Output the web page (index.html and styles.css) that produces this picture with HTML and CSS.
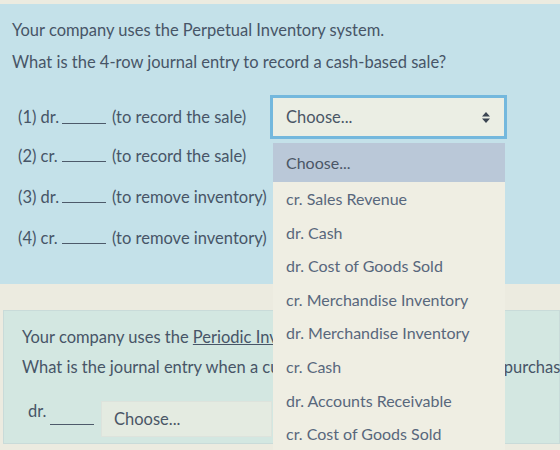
FILE: index.html
```html
<!DOCTYPE html>
<html>
<head>
<meta charset="utf-8">
<link rel="stylesheet" href="styles.css">
</head>
<body>
<div class="page">
  <section class="q q1">
    <p class="line">Your company uses the Perpetual Inventory system.</p>
    <p class="line">What is the 4-row journal entry to record a cash-based sale?</p>
    <div class="rows">
      <div class="row">
        <span class="lbl">(1) dr.</span><span class="blank"></span><span class="note">(to record the sale)</span>
        <div class="select focus">
          <span>Choose...</span>
          <svg class="arrows" width="8" height="11" viewBox="0 0 8 11"><path d="M4 0 L8 4.5 H0 Z M0 6.5 H8 L4 11 Z" fill="#3b4552"/></svg>
        </div>
      </div>
      <div class="row"><span class="lbl">(2) cr.</span><span class="blank"></span><span class="note">(to record the sale)</span></div>
      <div class="row"><span class="lbl">(3) dr.</span><span class="blank"></span><span class="note">(to remove inventory)</span></div>
      <div class="row"><span class="lbl">(4) cr.</span><span class="blank"></span><span class="note">(to remove inventory)</span></div>
    </div>
  </section>
  <section class="q q2">
    <p class="line">Your company uses the <a class="link">Periodic Inventory</a> system.</p>
    <p class="line">What is the journal entry when a customer pays for a merchandise purchase?</p>
    <div class="row2">
      <span class="lbl2">dr.</span><span class="blank"></span>
      <div class="select small"><span>Choose...</span></div>
    </div>
  </section>
  <ul class="dropdown">
    <li class="hi">Choose...</li>
    <li>cr. Sales Revenue</li>
    <li>dr. Cash</li>
    <li>dr. Cost of Goods Sold</li>
    <li>cr. Merchandise Inventory</li>
    <li>dr. Merchandise Inventory</li>
    <li>cr. Cash</li>
    <li>dr. Accounts Receivable</li>
    <li>cr. Cost of Goods Sold</li>
  </ul>
</div>
</body>
</html>
```
FILE: styles.css
```css
html, body {
  margin: 0;
  padding: 0;
}
body {
  width: 560px;
  height: 450px;
  overflow: hidden;
  background: #ecebe0;
  font-family: Lato, "Open Sans", sans-serif;
  font-size: 16.5px;
  color: #475567;
}
.page {
  position: relative;
  width: 560px;
  height: 450px;
  padding-top: 4px;
  box-sizing: border-box;
}
.q {
  box-sizing: border-box;
}
.q1 {
  height: 280px;
  background: #c4e1e9;
  padding: 15px 0 0 12px;
}
.line {
  margin: 0 0 10px 0;
  height: 22px;
  line-height: 22px;
  white-space: nowrap;
}
.q1 .line + .line {
  margin-bottom: 21px;
}
.rows {
  display: flex;
  flex-direction: column;
  padding-left: 6px;
}
.row {
  display: flex;
  align-items: center;
  height: 41px;
  white-space: nowrap;
}
.row:first-child {
  height: 46px;
  margin-bottom: -5px;
}
.lbl {
  width: 44px;
}
.blank {
  width: 44px;
  height: 0;
  border-bottom: 1px solid #4d5a6a;
  margin-top: 12px;
  margin-right: 6px;
}
.note {
  width: 158px;
}
.select {
  display: flex;
  align-items: center;
  justify-content: space-between;
  box-sizing: border-box;
  background: #ebeee4;
  color: #4a5666;
}
.select.focus {
  width: 237px;
  height: 44px;
  border: 3px solid #74b8dd;
  padding: 0 14px 0 13px;
}
.arrows {
  display: block;
}
.q2 {
  margin: 26px 0 0 3px;
  height: 134px;
  background: #d3e7e1;
  border: 1px solid #c9dbd9;
  padding: 15px 0 0 18px;
}
.q2 .line {
  margin-bottom: 8px;
}
.link {
  color: #475567;
  text-decoration: underline;
}
.row2 {
  display: flex;
  align-items: center;
  margin-top: 23px;
  padding-left: 6px;
}
.lbl2 {
  width: 22px;
  margin-top: -16px;
}
.row2 .blank {
  margin-right: 7px;
  margin-top: 10px;
}
.select.small {
  width: 171px;
  height: 36px;
  border: 1px solid #dde3dc;
  background: #e4ebe1;
  padding-left: 12px;
}
.dropdown {
  position: absolute;
  left: 273px;
  top: 143px;
  width: 232px;
  margin: 0;
  padding: 0;
  list-style: none;
  background: #efeee3;
  color: #58677c;
  font-size: 16px;
}
.dropdown li {
  height: 33.6px;
  line-height: 33.6px;
  padding-left: 13px;
  white-space: nowrap;
}
.dropdown li.hi {
  height: 39px;
  line-height: 40px;
  background: #bac8d8;
  color: #4a5666;
}
```
